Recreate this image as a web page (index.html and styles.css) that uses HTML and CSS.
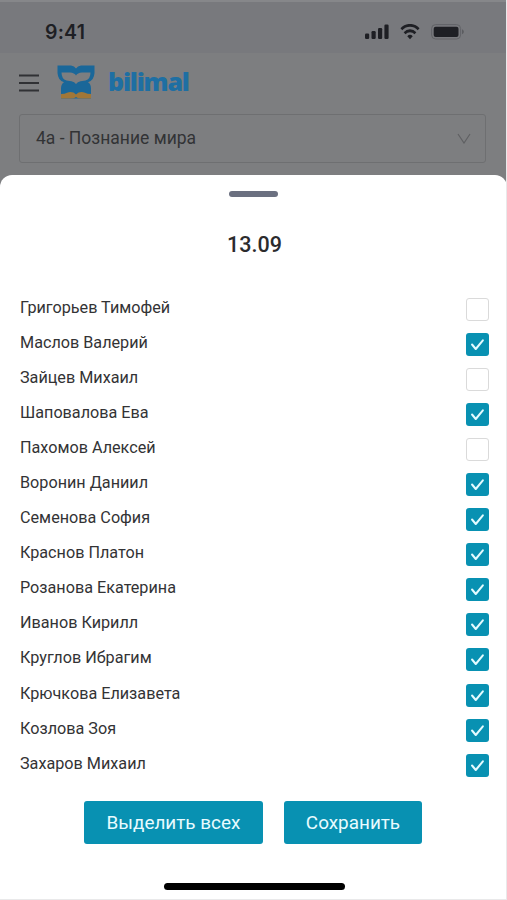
FILE: index.html
```html
<!DOCTYPE html>
<html lang="ru">
<head>
    <meta charset="UTF-8">
    <meta name="viewport" content="width=device-width, initial-scale=1">
    <title>bilimal</title>
    <link rel="stylesheet" href="styles.css">
</head>
<body class="page">
<svg width="0" height="0" class="symbols">
    <symbol id="check" viewBox="0 0 24 24">
        <path d="M6.3 12l3.9 4.7 7.4-9" fill="none" stroke="#e4fbff" stroke-width="2.1" stroke-linecap="round" stroke-linejoin="round"/>
    </symbol>
</svg>
<div class="status-bar">
    <span class="time">9:41</span>
    <div class="status-icons">
        <svg width="24" height="16" viewBox="0 0 24 16" fill="#1e1f24">
            <rect x="0" y="9.5" width="4.2" height="5.5" rx="1.2"/>
            <rect x="6.5" y="7" width="4.2" height="8" rx="1.2"/>
            <rect x="13" y="4" width="4.2" height="11" rx="1.2"/>
            <rect x="19.4" y="0.6" width="4.2" height="14.4" rx="1.2"/>
        </svg>
        <svg width="20" height="16" viewBox="0 0 22 16" preserveAspectRatio="none" fill="none" stroke="#1e1f24" stroke-width="2.8">
            <path d="M1.5 5.2a13.6 13.6 0 0 1 19 0"/>
            <path d="M5 9.2a8.6 8.6 0 0 1 12 0"/>
            <path d="M11 15.2l-3-3a4.4 4.4 0 0 1 6 0z" fill="#1e1f24" stroke="none"/>
        </svg>
        <svg width="33" height="16" viewBox="0 0 33 16">
            <rect x="0.6" y="0.6" width="29" height="14.4" rx="4" fill="none" stroke="#626367"/>
            <rect x="2.7" y="2.7" width="24.8" height="10.2" rx="2" fill="#1e1f24"/>
            <path d="M31 5.3v5c1.1-.4 1.8-1.4 1.8-2.5s-.7-2.1-1.8-2.5z" fill="#5b5c60"/>
        </svg>
    </div>
</div>
<header class="header">
    <svg width="20" height="18" viewBox="0 0 20 18" stroke="#303134" stroke-width="1.9">
        <path d="M0 1.5h20M0 9h20M0 16.5h20"/>
    </svg>
    <svg class="logo" width="38" height="34" viewBox="0 0 38 34">
        <path d="M0.5 0.5H14Q17.5 0.8 19 3.5Q20.5 0.8 24 0.5H37.5V8Q37 15.5 31 17.3Q34 19 34 23.5V33.5H4V23.5Q4 19 7 17.3Q1 15.5 0.5 8Z" fill="#1a6799"/>
        <path d="M4.5 7.5H13Q17.5 7.8 19 10.5Q20.5 7.8 25 7.5H33.5Q33.5 14 28.5 15.5L23.500 16.200Q20.500 16.800 19 19Q17.500 16.800 14.500 16.200L9.5 15.5Q4.5 14 4.5 7.5Z" fill="#7d7e80"/>
        <path d="M4 33.5V29Q8 29 10 27.7Q15.5 25.8 19 29.5Q22.5 25.8 28 27.7Q30 29 34 29V33.5H24Q20.5 33.5 19 32Q17.5 33.5 14 33.5Z" fill="#a17738"/>
    </svg>
    <span class="brand">bilimal</span>
</header>
<div class="select">
    <span>4а - Познание мира</span>
    <svg width="14" height="11" viewBox="0 0 14 11" fill="none" stroke="#5f6062" stroke-width="1.2">
        <path d="M1 1l6 9 6-9"/>
    </svg>
</div>
<main class="sheet">
    <div class="grip"></div>
    <h1 class="title">13.09</h1>
    <ul class="students">
        <li class="student"><span>Григорьев Тимофей</span><i class="box"></i></li>
        <li class="student"><span>Маслов Валерий</span><i class="box checked"><svg><use href="#check"/></svg></i></li>
        <li class="student"><span>Зайцев Михаил</span><i class="box"></i></li>
        <li class="student"><span>Шаповалова Ева</span><i class="box checked"><svg><use href="#check"/></svg></i></li>
        <li class="student"><span>Пахомов Алексей</span><i class="box"></i></li>
        <li class="student"><span>Воронин Даниил</span><i class="box checked"><svg><use href="#check"/></svg></i></li>
        <li class="student"><span>Семенова София</span><i class="box checked"><svg><use href="#check"/></svg></i></li>
        <li class="student"><span>Краснов Платон</span><i class="box checked"><svg><use href="#check"/></svg></i></li>
        <li class="student"><span>Розанова Екатерина</span><i class="box checked"><svg><use href="#check"/></svg></i></li>
        <li class="student"><span>Иванов Кирилл</span><i class="box checked"><svg><use href="#check"/></svg></i></li>
        <li class="student"><span>Круглов Ибрагим</span><i class="box checked"><svg><use href="#check"/></svg></i></li>
        <li class="student"><span>Крючкова Елизавета</span><i class="box checked"><svg><use href="#check"/></svg></i></li>
        <li class="student"><span>Козлова Зоя</span><i class="box checked"><svg><use href="#check"/></svg></i></li>
        <li class="student"><span>Захаров Михаил</span><i class="box checked"><svg><use href="#check"/></svg></i></li>
    </ul>
    <div class="actions">
        <button class="btn btn-all">Выделить всех</button>
        <button class="btn btn-save">Сохранить</button>
    </div>
    <div class="home-bar"></div>
</main>
</body>
</html>
```
FILE: styles.css
```css
* {
    box-sizing: border-box;
}

.page {
    display: flex;
    flex-direction: column;
    height: 900px;
    margin: 0;
    overflow: hidden;
    background: #7d7e80;
    border-right: 1px solid #e9e9ea;
    color: #333335;
    font-family: Roboto, sans-serif;
}

.symbols {
    display: none;
}

.status-bar {
    display: flex;
    flex: none;
    justify-content: space-between;
    height: 53px;
    padding: 10px 42px 0 45px;
    background: #78797d;
    border-top: 2px solid #86878a;
}

.time {
    color: #1e1f24;
    font: 600 19.5px/20px Inter, sans-serif;
    letter-spacing: 0.2px;
    padding-top: 10px;
}

.status-icons {
    display: flex;
    gap: 11px;
    padding-top: 12px;
}

.header {
    display: flex;
    flex: none;
    align-items: center;
    height: 60px;
    padding-left: 19px;
}

.logo {
    margin: 0 13px 3px 18px;
}

.brand {
    color: #1e6fa3;
    font: 800 25px/30px "Open Sans", sans-serif;
    letter-spacing: -1.2px;
    padding-bottom: 4px;
}

.select {
    display: flex;
    flex: none;
    align-items: center;
    justify-content: space-between;
    height: 49px;
    margin: 1px 20px 12px 19px;
    padding: 0 14px 1px 16px;
    border: 1px solid #6e6f71;
    border-radius: 3px;
    color: #323335;
    font-size: 17.5px;
}

.sheet {
    display: flex;
    flex: none;
    flex-direction: column;
    width: 507px;
    height: 725px;
    padding: 16px 18px 0 20px;
    background: #fff;
    border-bottom: 1px solid #e9e9ea;
    border-radius: 12px 12px 0 0;
}

.grip {
    width: 49px;
    height: 6px;
    margin-left: 209px;
    background: #6b7080;
    border-radius: 3px;
}

.title {
    margin: 34px 0 0;
    color: #2b2b2d;
    font-size: 21.5px;
    font-weight: 500;
    line-height: 28px;
    text-align: center;
}

.students {
    margin: 33px 0 0;
    padding: 0;
    list-style: none;
}

.student {
    display: flex;
    align-items: center;
    justify-content: space-between;
    height: 35.06px;
    font-size: 16.2px;
}

.student span {
    padding-bottom: 4px;
}

.box {
    width: 23px;
    height: 23px;
    border: 1.5px solid #dadada;
    border-radius: 3px;
}

.checked {
    background: #0891b2;
    border: none;
}

.box svg {
    display: block;
    width: 23px;
    height: 23px;
}

.actions {
    display: flex;
    gap: 21px;
    margin: 18px 0 0 64px;
}

.btn {
    height: 43px;
    padding: 0;
    background: #0891b2;
    border: none;
    border-radius: 3px;
    color: #e8fbff;
    font: 400 18.9px/43px Roboto, sans-serif;
}

.btn-all {
    width: 179px;
}

.btn-save {
    width: 138px;
}

.home-bar {
    width: 181px;
    height: 7px;
    margin: 39px 0 0 144px;
    background: #000;
    border-radius: 4px;
}
```
